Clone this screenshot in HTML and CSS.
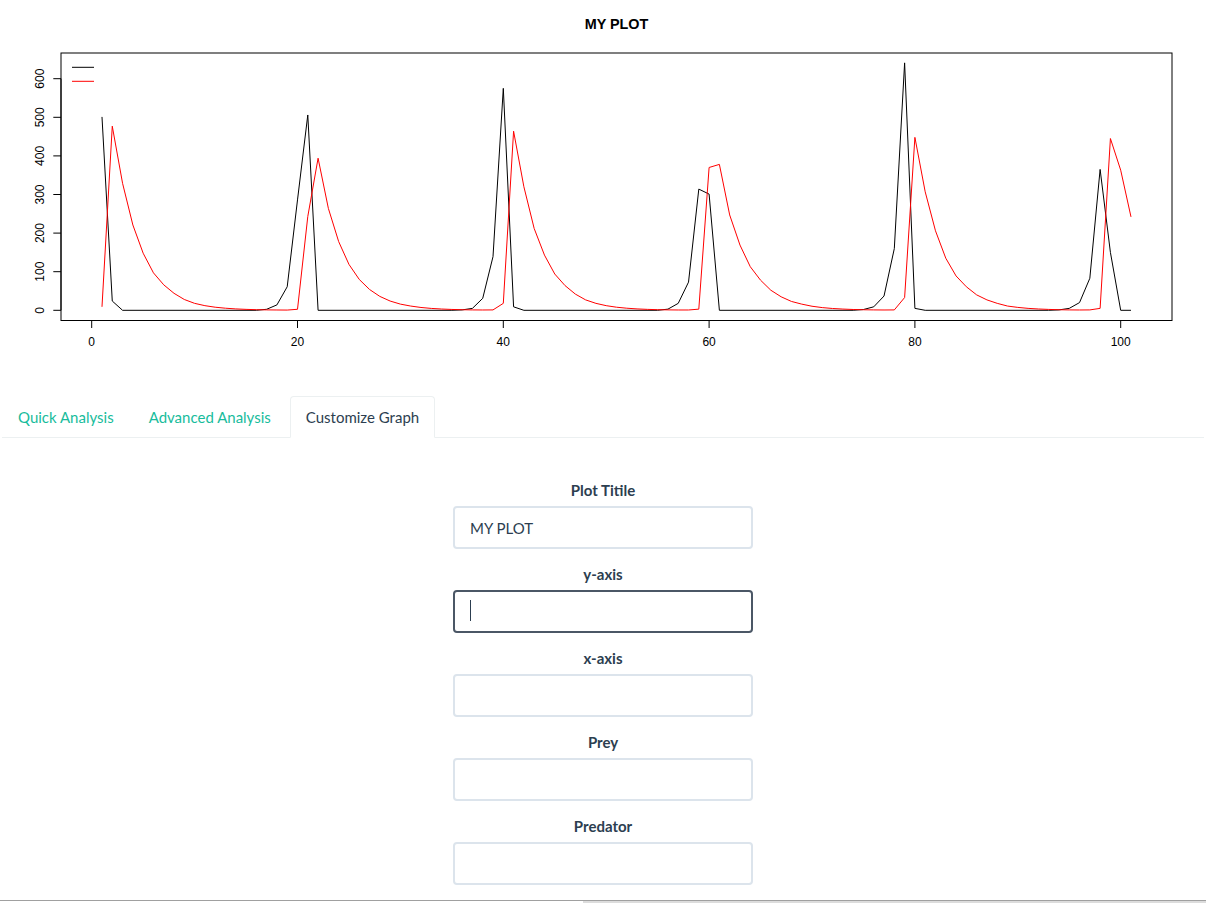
FILE: index.html
```html
<!DOCTYPE html>
<html lang="en">
<head>
<meta charset="utf-8">
<title>MY PLOT</title>
<link rel="stylesheet" href="styles.css">
</head>
<body>
<div class="page">
  <svg class="plot" width="1206" height="380" viewBox="0 0 1206 380" xmlns="http://www.w3.org/2000/svg">
    <text class="plot-title" x="616.5" y="29" text-anchor="middle">MY PLOT</text>
    <rect class="frame" x="61" y="53" width="1111" height="267.5"/>
    <g class="ticks">
      <line x1="61" y1="310.3" x2="61" y2="78.7"/>
      <line x1="53.3" y1="310.3" x2="61" y2="310.3"/>
      <line x1="53.3" y1="271.7" x2="61" y2="271.7"/>
      <line x1="53.3" y1="233.1" x2="61" y2="233.1"/>
      <line x1="53.3" y1="194.5" x2="61" y2="194.5"/>
      <line x1="53.3" y1="155.9" x2="61" y2="155.9"/>
      <line x1="53.3" y1="117.3" x2="61" y2="117.3"/>
      <line x1="53.3" y1="78.7" x2="61" y2="78.7"/>
      <line x1="91.7" y1="320.5" x2="1120.7" y2="320.5"/>
      <line x1="91.7" y1="320.5" x2="91.7" y2="328"/>
      <line x1="297.5" y1="320.5" x2="297.5" y2="328"/>
      <line x1="503.3" y1="320.5" x2="503.3" y2="328"/>
      <line x1="709.1" y1="320.5" x2="709.1" y2="328"/>
      <line x1="914.9" y1="320.5" x2="914.9" y2="328"/>
      <line x1="1120.7" y1="320.5" x2="1120.7" y2="328"/>
    </g>
    <g class="tick-label">
      <text transform="translate(44 310.3) rotate(-90)" text-anchor="middle">0</text>
      <text transform="translate(44 271.7) rotate(-90)" text-anchor="middle">100</text>
      <text transform="translate(44 233.1) rotate(-90)" text-anchor="middle">200</text>
      <text transform="translate(44 194.5) rotate(-90)" text-anchor="middle">300</text>
      <text transform="translate(44 155.9) rotate(-90)" text-anchor="middle">400</text>
      <text transform="translate(44 117.3) rotate(-90)" text-anchor="middle">500</text>
      <text transform="translate(44 78.7) rotate(-90)" text-anchor="middle">600</text>
      <text x="91.7" y="346" text-anchor="middle">0</text>
      <text x="297.5" y="346" text-anchor="middle">20</text>
      <text x="503.3" y="346" text-anchor="middle">40</text>
      <text x="709.1" y="346" text-anchor="middle">60</text>
      <text x="914.9" y="346" text-anchor="middle">80</text>
      <text x="1120.7" y="346" text-anchor="middle">100</text>
    </g>
    <line class="legend-black" x1="72" y1="67.3" x2="94" y2="67.3"/>
    <line class="legend-red" x1="72" y1="81.3" x2="94" y2="81.3"/>
    <g transform="translate(91.7 310.3) scale(10.29 -0.386)">
      <polyline class="series-black" vector-effect="non-scaling-stroke" points="1,501 2,24 3,0 16,0 17,2.6 18,14 19,61 20,286 21,506 22,0 35,0 36,1 37,5 38,31 39,139 40,575 41,9 42,0 55,0 56,3 57,18 58,73 59,314 60,301 61,0 74,0 75,2 76,9 77,37 78,160 79,641 80,5 81,0 93,0 94,1 95,5 96,20 97,83 98,365 99,150 100,0 101,0"/>
      <polyline class="series-red" vector-effect="non-scaling-stroke" points="1,9 2,477 3,329 4,221 5,148 6,97 7,66 8,44 9,28 10,18 11,12 12,8 13,5.4 14,3.6 15,2.4 16,1.6 17,1.1 18,0.8 19,0.6 20,2.6 21,243 22,394 23,264 24,178 25,119 26,80 27,54 28,36 29,24 30,16 31,11 32,7.3 33,4.9 34,3.3 35,2.2 36,1.5 37,1 38,0.8 39,1 40,18 41,464 42,320 43,212 44,143 45,94 46,64 47,42 48,27 49,18 50,12 51,8 52,5.4 53,3.6 54,2.4 55,1.6 56,1.1 57,0.8 58,0.8 59,3 60,370 61,378 62,247 63,169 64,113 65,78 66,52 67,35 68,23 69,16 70,10.5 71,7 72,4.7 73,3.2 74,2.1 75,1.4 76,1 77,0.8 78,1 79,33 80,448 81,307 82,206 83,135 84,89 85,61 86,40 87,27 88,18 89,11 90,7.5 91,5 92,3.4 93,2.3 94,1.5 95,1 96,0.8 97,1 98,5 99,445 100,363 101,242"/>
    </g>
  </svg>

  <ul class="tabs">
    <li class="tab"><a href="#">Quick Analysis</a></li>
    <li class="tab"><a href="#">Advanced Analysis</a></li>
    <li class="tab active"><a href="#">Customize Graph</a></li>
  </ul>

  <div class="tab-pane">
    <form class="form">
      <div class="form-group">
        <label for="title">Plot Titile</label>
        <input class="input" id="title" type="text" value="MY PLOT">
      </div>
      <div class="form-group">
        <label for="yaxis">y-axis</label>
        <div class="field">
          <input class="input focused" id="yaxis" type="text" value="">
          <span class="caret"></span>
        </div>
      </div>
      <div class="form-group">
        <label for="xaxis">x-axis</label>
        <input class="input" id="xaxis" type="text" value="">
      </div>
      <div class="form-group">
        <label for="prey">Prey</label>
        <input class="input" id="prey" type="text" value="">
      </div>
      <div class="form-group">
        <label for="predator">Predator</label>
        <input class="input" id="predator" type="text" value="">
      </div>
    </form>
  </div>

  <div class="bottom-bar">
    <div class="bottom-left"></div>
    <div class="bottom-right"></div>
  </div>
</div>
</body>
</html>
```

FILE: styles.css
```css
* {
  box-sizing: border-box;
}

html,
body {
  margin: 0;
  padding: 0;
  background: #ffffff;
  overflow: hidden;
}

body {
  font-family: Lato, "Helvetica Neue", Arial, sans-serif;
  font-size: 15px;
  color: #2c3e50;
}

.page {
  width: 1206px;
  height: 903px;
  display: flex;
  flex-direction: column;
}

.plot {
  display: block;
  flex: none;
}

.plot-title {
  font-family: "Liberation Sans", Arial, sans-serif;
  font-weight: bold;
  font-size: 14.4px;
  fill: #000000;
}

.frame {
  fill: none;
  stroke: #000000;
  stroke-width: 1;
}

.ticks line {
  stroke: #000000;
  stroke-width: 1;
}

.tick-label {
  font-family: "Liberation Sans", Arial, sans-serif;
  font-size: 12px;
  fill: #000000;
}

.legend-black,
.series-black {
  stroke: #000000;
  stroke-width: 1;
  fill: none;
}

.legend-red,
.series-red {
  stroke: #ff0000;
  stroke-width: 1;
  fill: none;
}

.series-black,
.series-red {
  stroke-linejoin: round;
}

.tabs {
  list-style: none;
  margin: 16px 2px 0;
  padding: 0;
  display: flex;
  border-bottom: 1px solid #ecf0f1;
  flex: none;
}

.tab {
  margin: 0 3px -1px 0;
}

.tab a {
  display: block;
  padding: 10px 15px;
  line-height: 20px;
  border: 1px solid transparent;
  border-radius: 4px 4px 0 0;
  color: #18bc9c;
  text-decoration: none;
}

.tab.active a {
  color: #2c3e50;
  background: #ffffff;
  border-color: #ecf0f1;
  border-bottom-color: transparent;
}

.tab-pane {
  flex: none;
}

.form {
  width: 300px;
  margin: 42px auto 0;
}

.form-group {
  display: flex;
  flex-direction: column;
  margin-bottom: 15px;
}

.form-group label {
  font-weight: bold;
  line-height: 21px;
  margin-bottom: 5px;
  text-align: center;
}

.field {
  position: relative;
}

.input {
  display: block;
  width: 300px;
  height: 43px;
  padding: 10px 15px;
  border: 2px solid #dce4ec;
  border-radius: 4px;
  font-family: Lato, "Helvetica Neue", Arial, sans-serif;
  font-size: 15px;
  color: #2c3e50;
  background: #ffffff;
  outline: none;
}

.input.focused {
  border-color: #4b5766;
}

.caret {
  position: absolute;
  left: 17px;
  top: 10px;
  width: 1px;
  height: 21px;
  background: #2c3e50;
}

.bottom-bar {
  flex: 1;
  display: flex;
  border-top: 1px solid #a0a0a0;
}

.bottom-left {
  width: 583px;
  background: #ffffff;
}

.bottom-right {
  flex: 1;
  background: #dcdcdc;
}
```
